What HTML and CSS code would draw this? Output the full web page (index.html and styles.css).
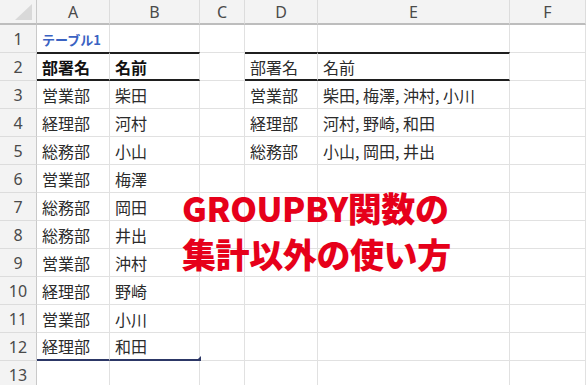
FILE: index.html
```html
<!DOCTYPE html>
<html lang="ja">
<head>
<meta charset="utf-8">
<title>GROUPBY関数の集計以外の使い方</title>
<link rel="stylesheet" href="styles.css">
</head>
<body>
<div class="sheet-wrap">
  <div class="sheet">
    <!-- column headers -->
    <div class="corner"><span class="corner-tri"></span></div>
    <div class="hd">A</div><div class="hd">B</div><div class="hd">C</div><div class="hd">D</div><div class="hd">E</div><div class="hd">F</div>

    <div class="rh">1</div><div class="c tname">テーブル1</div><div class="c"></div><div class="c"></div><div class="c"></div><div class="c"></div><div class="c"></div>

    <div class="rh">2</div><div class="c thead b">部署名</div><div class="c thead b">名前</div><div class="c"></div><div class="c thead">部署名</div><div class="c thead">名前</div><div class="c"></div>

    <div class="rh">3</div><div class="c">営業部</div><div class="c">柴田</div><div class="c"></div><div class="c">営業部</div><div class="c">柴田, 梅澤, 沖村, 小川</div><div class="c"></div>

    <div class="rh">4</div><div class="c">経理部</div><div class="c">河村</div><div class="c"></div><div class="c">経理部</div><div class="c">河村, 野崎, 和田</div><div class="c"></div>

    <div class="rh">5</div><div class="c">総務部</div><div class="c">小山</div><div class="c"></div><div class="c">総務部</div><div class="c">小山, 岡田, 井出</div><div class="c"></div>

    <div class="rh">6</div><div class="c">営業部</div><div class="c">梅澤</div><div class="c"></div><div class="c"></div><div class="c"></div><div class="c"></div>

    <div class="rh">7</div><div class="c">総務部</div><div class="c">岡田</div><div class="c"></div><div class="c"></div><div class="c"></div><div class="c"></div>

    <div class="rh">8</div><div class="c">総務部</div><div class="c">井出</div><div class="c"></div><div class="c"></div><div class="c"></div><div class="c"></div>

    <div class="rh">9</div><div class="c">営業部</div><div class="c">沖村</div><div class="c"></div><div class="c"></div><div class="c"></div><div class="c"></div>

    <div class="rh">10</div><div class="c">経理部</div><div class="c">野崎</div><div class="c"></div><div class="c"></div><div class="c"></div><div class="c"></div>

    <div class="rh">11</div><div class="c">営業部</div><div class="c">小川</div><div class="c"></div><div class="c"></div><div class="c"></div><div class="c"></div>

    <div class="rh">12</div><div class="c tlast">経理部</div><div class="c tlast handle">和田</div><div class="c"></div><div class="c"></div><div class="c"></div><div class="c"></div>

    <div class="rh">13</div><div class="c"></div><div class="c"></div><div class="c"></div><div class="c"></div><div class="c"></div><div class="c"></div>
  </div>

  <div class="headline">
    <div>GROUPBY関数の</div>
    <div>集計以外の使い方</div>
  </div>
</div>
</body>
</html>
```

FILE: styles.css
```css
html, body {
  margin: 0;
  padding: 0;
  background: #ffffff;
  overflow: hidden;
}

.sheet-wrap {
  position: relative;
  width: 586px;
  height: 385px;
  overflow: hidden;
}

.sheet {
  display: grid;
  grid-template-columns: 37px 73px 90px 45px 73px 192px 1fr;
  grid-template-rows: 25px repeat(13, 28px);
  font-family: "Noto Sans CJK JP", "Noto Sans", sans-serif;
}

.sheet > div {
  box-sizing: border-box;
  overflow: hidden;
  white-space: nowrap;
}

/* top-left select-all corner */
.corner {
  position: relative;
  background: #f3f3f3;
  border-right: 1px solid #c9c9c9;
  border-bottom: 2px solid #bdbdbd;
}
.corner-tri {
  position: absolute;
  right: 4px;
  bottom: 3px;
  width: 0;
  height: 0;
  border-left: 17px solid transparent;
  border-bottom: 16px solid #d9d9d9;
}

/* column letters */
.hd {
  background: #f3f3f3;
  border-right: 1px solid #dcdcdc;
  border-bottom: 2px solid #bdbdbd;
  color: #4a4a4a;
  font-family: "Noto Sans", "Liberation Sans", sans-serif;
  font-size: 16px;
  display: flex;
  align-items: center;
  justify-content: center;
  padding-top: 1px;
}

/* row numbers */
.rh {
  background: #f3f3f3;
  border-right: 1px solid #c9c9c9;
  border-bottom: 1px solid #dcdcdc;
  color: #4a4a4a;
  font-family: "Noto Sans", "Liberation Sans", sans-serif;
  font-size: 16px;
  display: flex;
  align-items: center;
  justify-content: center;
}

/* ordinary cells */
.c {
  border-right: 1px solid #e1e1e1;
  border-bottom: 1px solid #e1e1e1;
  color: #2b2b2b;
  font-size: 16px;
  display: flex;
  align-items: center;
  padding-left: 5px;
}

.tname {
  color: #3a62c2;
  font-weight: 700;
  font-size: 13px;
  padding-top: 2px;
}

/* table header row: heavy rule above and below */
.thead {
  border-top: 2px solid #1f1f1f;
  border-bottom: 2px solid #1f1f1f;
  margin-top: -1px;
}
.b {
  font-weight: 700;
  color: #111;
}

/* closing rule of the left table */
.tlast {
  border-bottom: 2px solid #2c3766;
}
.handle {
  position: relative;
  overflow: visible !important;
}
.handle::after {
  content: "";
  position: absolute;
  right: -2px;
  bottom: -2px;
  width: 0;
  height: 0;
  border-left: 5px solid transparent;
  border-bottom: 5px solid #2c3766;
}

/* red caption laid over the sheet */
.headline {
  position: absolute;
  left: 182px;
  top: 185px;
  color: #e6001a;
  font-family: "Noto Sans CJK JP", sans-serif;
  font-weight: 900;
  font-size: 34px;
  line-height: 46px;
  letter-spacing: -0.4px;
}
```
